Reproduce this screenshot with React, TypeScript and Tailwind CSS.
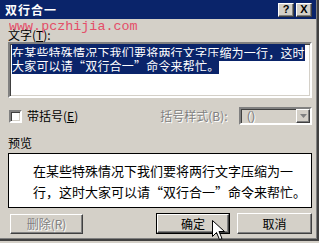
import React from "react";

const sunken =
  "border-2 border-t-[#808080] border-l-[#808080] border-r-white border-b-white shadow-[inset_1px_1px_0_#404040,inset_-1px_-1px_0_#d4d0c8]";
const raised =
  "border border-t-white border-l-white border-r-[#404040] border-b-[#404040] shadow-[inset_-1px_-1px_0_#808080]";
const disabledText = "text-[#808080] [text-shadow:1px_1px_0_#ffffff]";

function Cursor() {
  return (
    <svg
      className="absolute left-[212px] top-[220px]"
      width="14"
      height="22"
      viewBox="0 0 14 22"
    >
      <path
        d="M0.5 0.5 L0.5 16.5 L4.5 12.5 L7.5 19.5 L10 18.5 L7 11.5 L12.5 11.5 Z"
        fill="white"
        stroke="black"
        strokeWidth="1"
      />
    </svg>
  );
}

export default function App() {
  return (
    <div className="relative w-[319px] h-[243px] overflow-hidden bg-[#d4d0c8] font-['Noto_Sans_CJK_SC',sans-serif] text-[12px] leading-none text-black">
      <div className="absolute left-0 top-0 w-[319px] h-[241px] border-r-2 border-b-2 border-r-[#404040] border-b-[#404040] shadow-[inset_-1px_-1px_0_#808080] pointer-events-none" />

      {/* title bar */}
      <div className="flex items-center h-[19px] w-[316px] bg-[#0a246a] pl-[5px] pr-[4px]">
        <span className="font-bold text-white text-[12px] tracking-[1px]">双行合一</span>
        <div className="ml-auto flex gap-[2px]">
          <div className={`w-[16px] h-[14px] bg-[#d4d0c8] ${raised} flex items-center justify-center font-['Liberation_Sans',sans-serif] font-bold text-[11px]`}>
            ?
          </div>
          <div className={`w-[16px] h-[14px] bg-[#d4d0c8] ${raised} flex items-center justify-center font-['Liberation_Sans',sans-serif] font-bold text-[11px]`}>
            X
          </div>
        </div>
      </div>

      <div className="pl-[8px] pr-[7px]">
        <div className="mt-[10px] h-[12px] flex items-center">
          文字(<span className="underline">T</span>):
        </div>

        <div className={`mt-[1px] h-[56px] bg-white ${sunken} px-[2px] pt-[2px] text-[12px] leading-[13px] tracking-[0.2px]`}>
          <span className="bg-[#0a246a] text-white">
            在某些特殊情况下我们要将两行文字压缩为一行，这时 大家可以请“双行合一”命令来帮忙。
          </span>
        </div>

        <div className="mt-[9px] flex items-center h-[18px]">
          <div className={`w-[13px] h-[13px] bg-white ${sunken} ml-[1px]`} />
          <span className="ml-[5px]">
            带括号(<span className="underline">E</span>)
          </span>
          <span className={`ml-[82px] ${disabledText}`}>括号样式(B):</span>
          <div className={`ml-auto w-[73px] h-[18px] bg-[#d4d0c8] ${sunken} flex items-center`}>
            <span className={`pl-[6px] ${disabledText} font-['Liberation_Sans',sans-serif]`}>()</span>
            <div className={`ml-auto w-[14px] h-full bg-[#d4d0c8] ${raised} flex items-center justify-center`}>
              <svg width="7" height="4" viewBox="0 0 7 4">
                <path d="M0 0 H7 L3.5 4 Z" fill="#808080" />
              </svg>
            </div>
          </div>
        </div>

        <div className="mt-[12px] h-[12px]">预览</div>

        <div className="mt-[4px] h-[55px] bg-white border border-black flex flex-col justify-center pl-[24px] text-[13px] leading-[21px]">
          <div>在某些特殊情况下我们要将两行文字压缩为一</div>
          <div>行，这时大家可以请“双行合一”命令来帮忙。</div>
        </div>

        <div className="mt-[5px] flex items-center">
          <div className={`ml-[2px] w-[73px] h-[20px] ${raised} flex items-center justify-center ${disabledText}`}>
            删除(R)
          </div>
          <div className="ml-auto border border-black">
            <div className={`w-[72px] h-[19px] ${raised} flex items-center justify-center`}>确定</div>
          </div>
          <div className={`ml-[7px] w-[75px] h-[21px] ${raised} flex items-center justify-center`}>取消</div>
        </div>
      </div>

      <div className="absolute left-[9px] top-[20px] font-['Liberation_Mono',monospace] text-[13.4px] text-[#e6405e] opacity-90 pointer-events-none">
        www.pczhijia.com
      </div>

      <Cursor />
    </div>
  );
}
